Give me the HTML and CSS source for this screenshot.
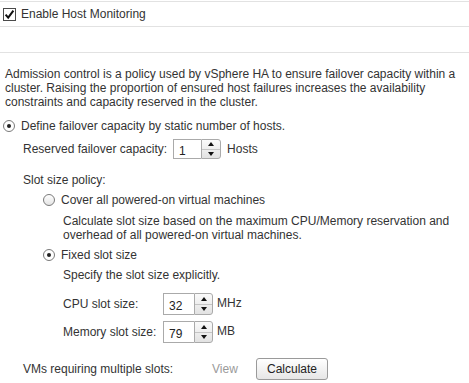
FILE: index.html
```html
<!DOCTYPE html>
<html>
<head>
<meta charset="utf-8">
<link rel="stylesheet" href="styles.css">
</head>
<body>
<div class="panel">
  <div class="hm-row">
    <span class="check">
      <svg width="13" height="13" viewBox="0 0 13 13"><rect x="0.5" y="0.5" width="12" height="12" fill="#fff" stroke="#4a4a4a"/><path d="M2.6 6.6 L5.2 9.6 L10.4 2.6" fill="none" stroke="#111" stroke-width="2"/></svg>
    </span>
    <span>Enable Host Monitoring</span>
  </div>
  <div class="blank-row"></div>

  <p class="desc">Admission control is a policy used by vSphere HA to ensure failover capacity within a cluster. Raising the proportion of ensured host failures increases the availability constraints and capacity reserved in the cluster.</p>

  <div class="opt opt-main">
    <span class="radio checked"></span>
    <span>Define failover capacity by static number of hosts.</span>
  </div>

  <div class="sub">
    <div class="field-row reserved">
      <span class="lbl">Reserved failover capacity:</span>
      <span class="spinner sp-res">
        <span class="sp-val">1</span>
        <span class="sp-btns"><span class="sp-up"></span><span class="sp-down"></span></span>
      </span>
      <span class="unit">Hosts</span>
    </div>

    <div class="slot-label">Slot size policy:</div>

    <div class="policy">
      <div class="opt opt-cover">
        <span class="radio"></span>
        <span>Cover all powered-on virtual machines</span>
      </div>
      <div class="hint hint-cover">Calculate slot size based on the maximum CPU/Memory reservation and overhead of all powered-on virtual machines.</div>

      <div class="opt opt-fixed">
        <span class="radio checked"></span>
        <span>Fixed slot size</span>
      </div>
      <div class="hint hint-fixed">Specify the slot size explicitly.</div>

      <div class="slot-grid">
        <span class="lbl">CPU slot size:</span>
        <span class="spinner sp-slot">
          <span class="sp-val">32</span>
          <span class="sp-btns"><span class="sp-up"></span><span class="sp-down"></span></span>
        </span>
        <span class="unit">MHz</span>

        <span class="lbl">Memory slot size:</span>
        <span class="spinner sp-slot">
          <span class="sp-val">79</span>
          <span class="sp-btns"><span class="sp-up"></span><span class="sp-down"></span></span>
        </span>
        <span class="unit">MB</span>
      </div>
    </div>

    <div class="vms-row">
      <span class="vms-lbl">VMs requiring multiple slots:</span>
      <span class="view">View</span>
      <span class="btn">Calculate</span>
    </div>
  </div>
</div>
</body>
</html>
```

FILE: styles.css
```css
html, body {
  margin: 0;
  padding: 0;
  background: #fff;
}
body {
  font-family: "Liberation Sans", Arial, sans-serif;
  font-size: 12px;
  line-height: 14px;
  color: #333;
}
.panel {
  width: 469px;
}
.hm-row {
  margin-top: 1px;
  border-top: 1px solid #e2e2e2;
  border-bottom: 1px solid #e2e2e2;
  height: 24px;
  display: flex;
  align-items: center;
  padding-left: 3px;
  gap: 5px;
}
.check {
  display: flex;
  width: 13px;
  height: 13px;
}
.blank-row {
  height: 25px;
  border-bottom: 1px solid #e2e2e2;
}
.desc {
  margin: 14px 0 0 0;
  padding: 0 5px 0 5px;
}
.opt {
  display: flex;
  align-items: center;
  gap: 6px;
  height: 14px;
}
.opt-main {
  margin-top: 10px;
  padding-left: 3px;
}
.radio {
  box-sizing: border-box;
  width: 12px;
  height: 12px;
  border-radius: 50%;
  border: 1px solid #7a7a7a;
  background: linear-gradient(#ffffff, #e4e4e4);
  display: flex;
  align-items: center;
  justify-content: center;
  flex: none;
}
.radio.checked {
  background: #fff;
}
.radio.checked::after {
  content: "";
  width: 4px;
  height: 4px;
  border-radius: 50%;
  background: #222;
}
.sub {
  padding-left: 23px;
}
.field-row {
  display: flex;
  align-items: center;
}
.reserved {
  margin-top: 6px;
  height: 20px;
}
.reserved .lbl {
  margin-right: 6px;
}
.spinner {
  display: flex;
  box-sizing: border-box;
  flex: none;
}
.sp-val {
  box-sizing: border-box;
  border: 1px solid #aaa;
  border-right: none;
  background: #fff;
  padding: 4px 0 0 5px;
  color: #222;
}
.sp-btns {
  box-sizing: border-box;
  border: 1px solid #aaa;
  border-radius: 0 3px 3px 0;
  background: linear-gradient(#fafafa, #e2e2e2);
  display: flex;
  flex-direction: column;
  width: 20px;
}
.sp-up, .sp-down {
  flex: 1;
  display: flex;
  align-items: center;
  justify-content: center;
}
.sp-up {
  border-bottom: 1px solid #c4c4c4;
}
.sp-up::after {
  content: "";
  border-left: 3px solid transparent;
  border-right: 3px solid transparent;
  border-bottom: 4px solid #111;
}
.sp-down::after {
  content: "";
  border-left: 3px solid transparent;
  border-right: 3px solid transparent;
  border-top: 4px solid #111;
}
.sp-res {
  height: 20px;
}
.sp-res .sp-val {
  width: 28px;
}
.unit {
  margin-left: 6px;
}
.slot-label {
  margin-top: 14px;
}
.policy {
  padding-left: 20px;
}
.opt-cover {
  margin-top: 6px;
}
.hint {
  padding-left: 20px;
}
.hint-cover {
  margin-top: 7px;
}
.opt-fixed {
  margin-top: 6px;
}
.hint-fixed {
  margin-top: 6px;
}
.slot-grid {
  margin-top: 11px;
  padding-left: 20px;
  display: grid;
  grid-template-columns: 100px auto 1fr;
  row-gap: 6px;
  align-items: center;
}
.sp-slot {
  height: 22px;
}
.sp-slot .sp-val {
  width: 31px;
  padding-top: 5px;
}
.sp-slot .sp-btns {
  width: 19px;
}
.slot-grid .unit {
  margin-left: 4px;
  margin-top: -2px;
}
.vms-row {
  margin-top: 15px;
  display: flex;
  align-items: center;
  height: 22px;
}
.vms-lbl {
  width: 189px;
}
.view {
  width: 44px;
  color: #9a9a9a;
}
.btn {
  box-sizing: border-box;
  width: 72px;
  height: 22px;
  border: 1px solid #9a9a9a;
  border-radius: 3px;
  background: linear-gradient(#ffffff, #e6e6e6);
  display: flex;
  align-items: center;
  justify-content: center;
  color: #222;
}
```
